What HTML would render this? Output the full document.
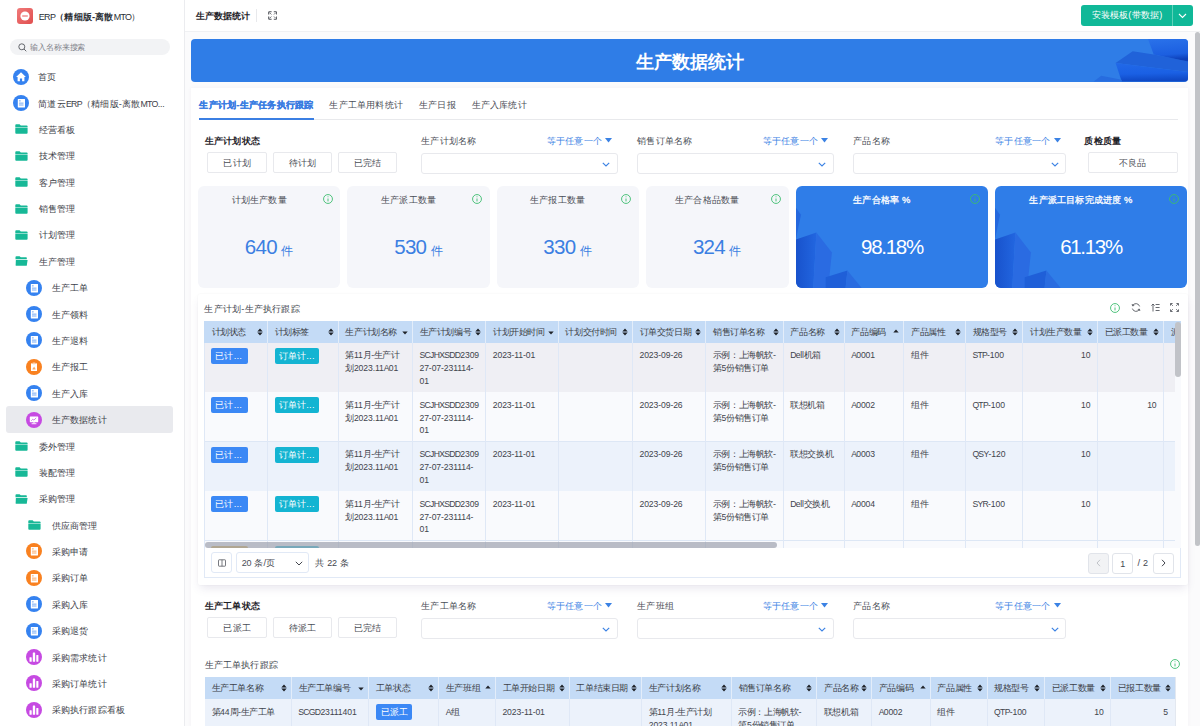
<!DOCTYPE html><html><head><meta charset="utf-8"><title>生产数据统计</title><style>
*{box-sizing:border-box;margin:0;padding:0}
html,body{width:1200px;height:726px;overflow:hidden;background:#fff;font-family:"Liberation Sans",sans-serif;color:#333;letter-spacing:0.2px}
.a{position:absolute}
.t{white-space:nowrap;line-height:1}
#side{position:absolute;left:0;top:0;width:184px;height:726px;background:#fff}
#sideb{position:absolute;left:184px;top:0;width:1px;height:726px;background:#ebecef}
.si{position:absolute;left:0;width:184px;height:26px}
.si .tx{position:absolute;top:50%;transform:translateY(-50%);font-size:9.6px;color:#3a3d45;white-space:nowrap;line-height:1}
.ic{position:absolute;width:16px;height:16px;border-radius:50%}
#head{position:absolute;left:185px;top:0;width:1015px;height:32px;background:#fff;border-bottom:1px solid #f0f1f3}
#main{position:absolute;left:185px;top:32px;width:1015px;height:694px;background:#fbfbfc;overflow:hidden}
.banner{position:absolute;left:6px;top:7.1px;width:997px;height:42.6px;border-radius:4px;background:#2f7de7;overflow:hidden}
.card{position:absolute;background:#fff}
.btn{position:absolute;height:21px;border:1px solid #e8e9ed;border-radius:2px;background:#fff;font-size:9.4px;color:#4a4d55;text-align:center;line-height:19px;white-space:nowrap}
.lbl{position:absolute;font-size:9.4px;color:#4a4d55;white-space:nowrap;line-height:1}
.lblb{position:absolute;font-size:9.4px;color:#1f2329;font-weight:bold;white-space:nowrap;line-height:1}
.eq{position:absolute;font-size:9.4px;color:#3b82e4;white-space:nowrap;line-height:1}
.sel{position:absolute;height:21px;border:1px solid #e8e9ed;border-radius:3px;background:#fff}
.stat{position:absolute;top:97.6px;height:102px;border-radius:6px;background:#f5f6fa;overflow:hidden}
.stat .st{position:absolute;top:13px;width:100%;text-align:center;font-size:9.4px;color:#494c54;line-height:1;white-space:nowrap}
.stat .sv{position:absolute;top:52px;width:100%;text-align:center;color:#3b7fe2;white-space:nowrap;line-height:1}
.th{position:absolute;height:100%;top:0;font-size:9.4px;color:#3c3f47;white-space:nowrap;line-height:1}
.td{position:absolute;font-size:9px;color:#41444c;white-space:nowrap;line-height:12.8px;letter-spacing:-0.4px}
.U{letter-spacing:-0.7px;font-size:0.957em}.W{letter-spacing:-0.25px;font-size:0.957em}.D{letter-spacing:-0.1px;font-size:0.957em}
.tag{position:absolute;height:15.8px;border-radius:2px;color:#fff;font-size:9.4px;line-height:15.8px;padding-left:4px;white-space:nowrap}
</style></head><body>
<div id="side">
<div class="a" style="left:17px;top:8px;width:16px;height:16px;border-radius:3px;background:linear-gradient(135deg,#f07a7a,#e04e4e)"><svg class="a" style="left:0;top:0" width="16" height="16" viewBox="0 0 16 16"><circle cx="8" cy="8" r="4.6" fill="#fff"/><rect x="5.2" y="7.3" width="5.6" height="1.4" fill="#ec6a6a" opacity="0.8"/></svg></div>
<div class="a t" style="left:38.8px;top:11.8px;font-size:9.4px;color:#2b2f36"><span class="U">ERP</span><b style="font-weight:600">（精细版-离散</b><span class="U">MTO</span>）</div>
<div class="a" style="left:10px;top:39px;width:160px;height:16px;border-radius:8px;background:#f2f3f5"></div>
<svg class="a" style="left:17.5px;top:42.5px" width="9" height="9" viewBox="0 0 9 9"><circle cx="3.8" cy="3.8" r="3.0" fill="none" stroke="#55585f" stroke-width="0.9"/><line x1="6" y1="6" x2="8.3" y2="8.3" stroke="#55585f" stroke-width="0.9"/></svg>
<div class="a t" style="left:30.3px;top:44.2px;font-size:7.8px;color:#7d8088;letter-spacing:-0.15px">输入名称来搜索</div>
<svg class="a" style="left:13px;top:68.6px" width="16" height="16" viewBox="0 0 16 16"><circle cx="8" cy="8" r="8" fill="#3582f0"/><path d="M8 3.3 L12.9 8.1 L11.4 8.1 L11.4 12.3 L9.1 12.3 L9.1 9.4 L6.9 9.4 L6.9 12.3 L4.6 12.3 L4.6 8.1 L3.1 8.1 Z" fill="#fff"/></svg>
<div class="a t" style="left:38.3px;top:73.20px;font-size:9.2px;color:#3d4149">首页</div>
<svg class="a" style="left:13px;top:94.97999999999999px" width="16" height="16" viewBox="0 0 16 16"><circle cx="8" cy="8" r="8" fill="#3582f0"/><rect x="4.8" y="3.9" width="7.2" height="8.5" rx="0.3" fill="#fff"/><rect x="6.0" y="5.5" width="1.7" height="0.8" fill="#3582f0" opacity="0.85"/><rect x="6.0" y="7.7" width="4.5" height="0.8" fill="#3582f0" opacity="0.85"/><rect x="6.0" y="9.6" width="4.5" height="0.8" fill="#3582f0" opacity="0.85"/></svg>
<div class="a t" style="left:38.3px;top:99.58px;font-size:9.2px;color:#3d4149">简道云<span class="U">ERP</span>（精细版-离散<span class="U">MTO</span><span class="D">...</span></div>
<svg class="a" style="left:14.8px;top:124.35999999999999px" width="13" height="10" viewBox="0 0 13 10"><path d="M0.3 1.2 Q0.3 0.3 1.2 0.3 L4.6 0.3 L5.8 1.4 L11.6 1.4 Q12.6 1.4 12.6 2.3 L12.6 2.9 L0.3 2.9 Z" fill="#17b897"/><path d="M0.3 3.6 L12.6 3.6 L12.6 8.8 Q12.6 9.7 11.7 9.7 L1.2 9.7 Q0.3 9.7 0.3 8.8 Z" fill="#17b897"/></svg>
<div class="a t" style="left:38.599999999999994px;top:125.96px;font-size:9.2px;color:#3d4149">经营看板</div>
<svg class="a" style="left:14.8px;top:150.74px" width="13" height="10" viewBox="0 0 13 10"><path d="M0.3 1.2 Q0.3 0.3 1.2 0.3 L4.6 0.3 L5.8 1.4 L11.6 1.4 Q12.6 1.4 12.6 2.3 L12.6 2.9 L0.3 2.9 Z" fill="#17b897"/><path d="M0.3 3.6 L12.6 3.6 L12.6 8.8 Q12.6 9.7 11.7 9.7 L1.2 9.7 Q0.3 9.7 0.3 8.8 Z" fill="#17b897"/></svg>
<div class="a t" style="left:38.599999999999994px;top:152.34px;font-size:9.2px;color:#3d4149">技术管理</div>
<svg class="a" style="left:14.8px;top:177.12px" width="13" height="10" viewBox="0 0 13 10"><path d="M0.3 1.2 Q0.3 0.3 1.2 0.3 L4.6 0.3 L5.8 1.4 L11.6 1.4 Q12.6 1.4 12.6 2.3 L12.6 2.9 L0.3 2.9 Z" fill="#17b897"/><path d="M0.3 3.6 L12.6 3.6 L12.6 8.8 Q12.6 9.7 11.7 9.7 L1.2 9.7 Q0.3 9.7 0.3 8.8 Z" fill="#17b897"/></svg>
<div class="a t" style="left:38.599999999999994px;top:178.72px;font-size:9.2px;color:#3d4149">客户管理</div>
<svg class="a" style="left:14.8px;top:203.5px" width="13" height="10" viewBox="0 0 13 10"><path d="M0.3 1.2 Q0.3 0.3 1.2 0.3 L4.6 0.3 L5.8 1.4 L11.6 1.4 Q12.6 1.4 12.6 2.3 L12.6 2.9 L0.3 2.9 Z" fill="#17b897"/><path d="M0.3 3.6 L12.6 3.6 L12.6 8.8 Q12.6 9.7 11.7 9.7 L1.2 9.7 Q0.3 9.7 0.3 8.8 Z" fill="#17b897"/></svg>
<div class="a t" style="left:38.599999999999994px;top:205.10px;font-size:9.2px;color:#3d4149">销售管理</div>
<svg class="a" style="left:14.8px;top:229.88px" width="13" height="10" viewBox="0 0 13 10"><path d="M0.3 1.2 Q0.3 0.3 1.2 0.3 L4.6 0.3 L5.8 1.4 L11.6 1.4 Q12.6 1.4 12.6 2.3 L12.6 2.9 L0.3 2.9 Z" fill="#17b897"/><path d="M0.3 3.6 L12.6 3.6 L12.6 8.8 Q12.6 9.7 11.7 9.7 L1.2 9.7 Q0.3 9.7 0.3 8.8 Z" fill="#17b897"/></svg>
<div class="a t" style="left:38.599999999999994px;top:231.48px;font-size:9.2px;color:#3d4149">计划管理</div>
<svg class="a" style="left:14.8px;top:256.26px" width="13" height="10" viewBox="0 0 13 10"><path d="M0.5 1.2 Q0.5 0.3 1.4 0.3 L4.6 0.3 L5.8 1.3 L11.2 1.3 Q11.8 1.3 11.8 2 L11.8 3.2 L0.5 3.2 Z" fill="#17b897"/><path d="M0.9 3.9 L12.6 3.9 L11.8 9.4 Q11.7 9.7 11.3 9.7 L1.0 9.7 Q0.6 9.7 0.6 9.3 Z" fill="#17b897"/></svg>
<div class="a t" style="left:38.599999999999994px;top:257.86px;font-size:9.2px;color:#3d4149">生产管理</div>
<svg class="a" style="left:26.3px;top:279.64px" width="16" height="16" viewBox="0 0 16 16"><circle cx="8" cy="8" r="8" fill="#3582f0"/><rect x="4.8" y="3.9" width="7.2" height="8.5" rx="0.3" fill="#fff"/><rect x="6.0" y="5.5" width="1.7" height="0.8" fill="#3582f0" opacity="0.85"/><rect x="6.0" y="7.7" width="4.5" height="0.8" fill="#3582f0" opacity="0.85"/><rect x="6.0" y="9.6" width="4.5" height="0.8" fill="#3582f0" opacity="0.85"/></svg>
<div class="a t" style="left:51.599999999999994px;top:284.24px;font-size:9.2px;color:#3d4149">生产工单</div>
<svg class="a" style="left:26.3px;top:306.02px" width="16" height="16" viewBox="0 0 16 16"><circle cx="8" cy="8" r="8" fill="#3582f0"/><rect x="4.8" y="3.9" width="7.2" height="8.5" rx="0.3" fill="#fff"/><rect x="6.0" y="5.5" width="1.7" height="0.8" fill="#3582f0" opacity="0.85"/><rect x="6.0" y="7.7" width="4.5" height="0.8" fill="#3582f0" opacity="0.85"/><rect x="6.0" y="9.6" width="4.5" height="0.8" fill="#3582f0" opacity="0.85"/></svg>
<div class="a t" style="left:51.599999999999994px;top:310.62px;font-size:9.2px;color:#3d4149">生产领料</div>
<svg class="a" style="left:26.3px;top:332.4px" width="16" height="16" viewBox="0 0 16 16"><circle cx="8" cy="8" r="8" fill="#3582f0"/><rect x="4.8" y="3.9" width="7.2" height="8.5" rx="0.3" fill="#fff"/><rect x="6.0" y="5.5" width="1.7" height="0.8" fill="#3582f0" opacity="0.85"/><rect x="6.0" y="7.7" width="4.5" height="0.8" fill="#3582f0" opacity="0.85"/><rect x="6.0" y="9.6" width="4.5" height="0.8" fill="#3582f0" opacity="0.85"/></svg>
<div class="a t" style="left:51.599999999999994px;top:337.00px;font-size:9.2px;color:#3d4149">生产退料</div>
<svg class="a" style="left:26.3px;top:358.78px" width="16" height="16" viewBox="0 0 16 16"><circle cx="8" cy="8" r="8" fill="#f98120"/><rect x="5" y="4.2" width="6" height="7.8" rx="0.6" fill="#fff"/><rect x="6.6" y="3.6" width="2.8" height="1.2" rx="0.3" fill="#fff" stroke="#f98120" stroke-width="0.4"/><path d="M6.4 10.6 L7.3 8 L8 9.3 L8.6 7.4 L9.6 10.6 Z" fill="#f98120" opacity="0.7"/></svg>
<div class="a t" style="left:51.599999999999994px;top:363.38px;font-size:9.2px;color:#3d4149">生产报工</div>
<svg class="a" style="left:26.3px;top:385.15999999999997px" width="16" height="16" viewBox="0 0 16 16"><circle cx="8" cy="8" r="8" fill="#3582f0"/><rect x="4.8" y="3.9" width="7.2" height="8.5" rx="0.3" fill="#fff"/><rect x="6.0" y="5.5" width="1.7" height="0.8" fill="#3582f0" opacity="0.85"/><rect x="6.0" y="7.7" width="4.5" height="0.8" fill="#3582f0" opacity="0.85"/><rect x="6.0" y="9.6" width="4.5" height="0.8" fill="#3582f0" opacity="0.85"/></svg>
<div class="a t" style="left:51.599999999999994px;top:389.76px;font-size:9.2px;color:#3d4149">生产入库</div>
<div class="a" style="left:5.6px;top:406.14px;width:167.4px;height:26.4px;border-radius:3px;background:#e9eaee"></div>
<svg class="a" style="left:26.3px;top:411.53999999999996px" width="16" height="16" viewBox="0 0 16 16"><circle cx="8" cy="8" r="8" fill="#c64ae2"/><rect x="3.8" y="4.4" width="8.4" height="5.8" rx="0.6" fill="#fff"/><rect x="7.4" y="10.2" width="1.2" height="1.2" fill="#fff"/><rect x="5.6" y="11.3" width="4.8" height="0.9" fill="#fff"/><path d="M5.2 8.8 L6.8 7.2 L7.9 8.1 L10.2 5.9" stroke="#c64ae2" stroke-width="0.7" fill="none"/></svg>
<div class="a t" style="left:51.599999999999994px;top:416.14px;font-size:9.2px;color:#3d4149">生产数据统计</div>
<svg class="a" style="left:14.8px;top:440.91999999999996px" width="13" height="10" viewBox="0 0 13 10"><path d="M0.3 1.2 Q0.3 0.3 1.2 0.3 L4.6 0.3 L5.8 1.4 L11.6 1.4 Q12.6 1.4 12.6 2.3 L12.6 2.9 L0.3 2.9 Z" fill="#17b897"/><path d="M0.3 3.6 L12.6 3.6 L12.6 8.8 Q12.6 9.7 11.7 9.7 L1.2 9.7 Q0.3 9.7 0.3 8.8 Z" fill="#17b897"/></svg>
<div class="a t" style="left:38.599999999999994px;top:442.52px;font-size:9.2px;color:#3d4149">委外管理</div>
<svg class="a" style="left:14.8px;top:467.29999999999995px" width="13" height="10" viewBox="0 0 13 10"><path d="M0.3 1.2 Q0.3 0.3 1.2 0.3 L4.6 0.3 L5.8 1.4 L11.6 1.4 Q12.6 1.4 12.6 2.3 L12.6 2.9 L0.3 2.9 Z" fill="#17b897"/><path d="M0.3 3.6 L12.6 3.6 L12.6 8.8 Q12.6 9.7 11.7 9.7 L1.2 9.7 Q0.3 9.7 0.3 8.8 Z" fill="#17b897"/></svg>
<div class="a t" style="left:38.599999999999994px;top:468.90px;font-size:9.2px;color:#3d4149">装配管理</div>
<svg class="a" style="left:14.8px;top:493.67999999999995px" width="13" height="10" viewBox="0 0 13 10"><path d="M0.5 1.2 Q0.5 0.3 1.4 0.3 L4.6 0.3 L5.8 1.3 L11.2 1.3 Q11.8 1.3 11.8 2 L11.8 3.2 L0.5 3.2 Z" fill="#17b897"/><path d="M0.9 3.9 L12.6 3.9 L11.8 9.4 Q11.7 9.7 11.3 9.7 L1.0 9.7 Q0.6 9.7 0.6 9.3 Z" fill="#17b897"/></svg>
<div class="a t" style="left:38.599999999999994px;top:495.28px;font-size:9.2px;color:#3d4149">采购管理</div>
<svg class="a" style="left:28px;top:520.06px" width="13" height="10" viewBox="0 0 13 10"><path d="M0.3 1.2 Q0.3 0.3 1.2 0.3 L4.6 0.3 L5.8 1.4 L11.6 1.4 Q12.6 1.4 12.6 2.3 L12.6 2.9 L0.3 2.9 Z" fill="#17b897"/><path d="M0.3 3.6 L12.6 3.6 L12.6 8.8 Q12.6 9.7 11.7 9.7 L1.2 9.7 Q0.3 9.7 0.3 8.8 Z" fill="#17b897"/></svg>
<div class="a t" style="left:51.599999999999994px;top:521.66px;font-size:9.2px;color:#3d4149">供应商管理</div>
<svg class="a" style="left:26.3px;top:543.4399999999999px" width="16" height="16" viewBox="0 0 16 16"><circle cx="8" cy="8" r="8" fill="#f98120"/><rect x="4.8" y="3.9" width="7.2" height="8.5" rx="0.3" fill="#fff"/><rect x="6.0" y="5.5" width="1.7" height="0.8" fill="#f98120" opacity="0.85"/><rect x="6.0" y="7.7" width="4.5" height="0.8" fill="#f98120" opacity="0.85"/><rect x="6.0" y="9.6" width="4.5" height="0.8" fill="#f98120" opacity="0.85"/></svg>
<div class="a t" style="left:51.599999999999994px;top:548.04px;font-size:9.2px;color:#3d4149">采购申请</div>
<svg class="a" style="left:26.3px;top:569.8199999999999px" width="16" height="16" viewBox="0 0 16 16"><circle cx="8" cy="8" r="8" fill="#f98120"/><rect x="4.8" y="3.9" width="7.2" height="8.5" rx="0.3" fill="#fff"/><rect x="6.0" y="5.5" width="1.7" height="0.8" fill="#f98120" opacity="0.85"/><rect x="6.0" y="7.7" width="4.5" height="0.8" fill="#f98120" opacity="0.85"/><rect x="6.0" y="9.6" width="4.5" height="0.8" fill="#f98120" opacity="0.85"/></svg>
<div class="a t" style="left:51.599999999999994px;top:574.42px;font-size:9.2px;color:#3d4149">采购订单</div>
<svg class="a" style="left:26.3px;top:596.2px" width="16" height="16" viewBox="0 0 16 16"><circle cx="8" cy="8" r="8" fill="#3582f0"/><rect x="4.8" y="3.9" width="7.2" height="8.5" rx="0.3" fill="#fff"/><rect x="6.0" y="5.5" width="1.7" height="0.8" fill="#3582f0" opacity="0.85"/><rect x="6.0" y="7.7" width="4.5" height="0.8" fill="#3582f0" opacity="0.85"/><rect x="6.0" y="9.6" width="4.5" height="0.8" fill="#3582f0" opacity="0.85"/></svg>
<div class="a t" style="left:51.599999999999994px;top:600.80px;font-size:9.2px;color:#3d4149">采购入库</div>
<svg class="a" style="left:26.3px;top:622.58px" width="16" height="16" viewBox="0 0 16 16"><circle cx="8" cy="8" r="8" fill="#3582f0"/><rect x="4.8" y="3.9" width="7.2" height="8.5" rx="0.3" fill="#fff"/><rect x="6.0" y="5.5" width="1.7" height="0.8" fill="#3582f0" opacity="0.85"/><rect x="6.0" y="7.7" width="4.5" height="0.8" fill="#3582f0" opacity="0.85"/><rect x="6.0" y="9.6" width="4.5" height="0.8" fill="#3582f0" opacity="0.85"/></svg>
<div class="a t" style="left:51.599999999999994px;top:627.18px;font-size:9.2px;color:#3d4149">采购退货</div>
<svg class="a" style="left:26.3px;top:648.96px" width="16" height="16" viewBox="0 0 16 16"><circle cx="8" cy="8" r="8" fill="#c64ae2"/><rect x="3.5" y="8.2" width="2.2" height="4.5" rx="0.5" fill="#fff"/><rect x="6.8" y="3.4" width="2.35" height="9.3" rx="0.5" fill="#fff"/><rect x="10.3" y="5.9" width="2.1" height="6.8" rx="0.5" fill="#fff"/></svg>
<div class="a t" style="left:51.599999999999994px;top:653.56px;font-size:9.2px;color:#3d4149">采购需求统计</div>
<svg class="a" style="left:26.3px;top:675.34px" width="16" height="16" viewBox="0 0 16 16"><circle cx="8" cy="8" r="8" fill="#c64ae2"/><rect x="3.5" y="8.2" width="2.2" height="4.5" rx="0.5" fill="#fff"/><rect x="6.8" y="3.4" width="2.35" height="9.3" rx="0.5" fill="#fff"/><rect x="10.3" y="5.9" width="2.1" height="6.8" rx="0.5" fill="#fff"/></svg>
<div class="a t" style="left:51.599999999999994px;top:679.94px;font-size:9.2px;color:#3d4149">采购订单统计</div>
<svg class="a" style="left:26.3px;top:701.72px" width="16" height="16" viewBox="0 0 16 16"><circle cx="8" cy="8" r="8" fill="#c64ae2"/><rect x="3.5" y="8.2" width="2.2" height="4.5" rx="0.5" fill="#fff"/><rect x="6.8" y="3.4" width="2.35" height="9.3" rx="0.5" fill="#fff"/><rect x="10.3" y="5.9" width="2.1" height="6.8" rx="0.5" fill="#fff"/></svg>
<div class="a t" style="left:51.599999999999994px;top:706.32px;font-size:9.2px;color:#3d4149">采购执行跟踪看板</div>
</div><div id="sideb"></div>
<div id="head">
<div class="a t" style="left:10.5px;top:11.2px;font-size:9.4px;font-weight:bold;color:#1f2329">生产数据统计</div>
<div class="a" style="left:71px;top:9px;width:1px;height:13px;background:#e8e9ec"></div>
<svg class="a" style="left:82.7px;top:11.3px" width="9.4" height="9" viewBox="0 0 9.4 9" fill="none" stroke="#50535a" stroke-width="1.1"><path d="M3.6 0.8 H1.4 Q0.7 0.8 0.7 1.5 V3.4 M5.8 0.8 H8 Q8.7 0.8 8.7 1.5 V3.4 M8.7 5.6 V7.5 Q8.7 8.2 8 8.2 H5.8 M3.6 8.2 H1.4 Q0.7 8.2 0.7 7.5 V5.6"/><path d="M1.6 1.7 L3.4 3.5 M7.8 1.7 L6 3.5 M7.8 7.3 L6 5.5 M1.6 7.3 L3.4 5.5" stroke-width="0.8"/></svg>
<div class="a" style="left:896px;top:5.2px;width:112px;height:21px;border-radius:3px;background:#10b898"></div>
<div class="a" style="left:987px;top:5.2px;width:1px;height:21px;background:#5fd1b8"></div>
<div class="a t" style="left:906.5px;top:11.2px;font-size:9.2px;color:#fff">安装模板(带数据)</div>
<svg class="a" style="left:993px;top:13px" width="9" height="6" viewBox="0 0 9 6"><path d="M1 1 L4.5 4.5 L8 1" stroke="#fff" stroke-width="1.1" fill="none"/></svg>
</div>
<div id="main">
<div class="banner"><svg class="a" style="left:0;top:0" width="997" height="42.5" viewBox="0 0 997 42.5"><defs><linearGradient id="bg1" x1="0" y1="0" x2="0.15" y2="1"><stop offset="0" stop-color="#2a72ea"/><stop offset="0.75" stop-color="#1c5fe0"/><stop offset="1" stop-color="#0d3fb8"/></linearGradient><linearGradient id="bg2" x1="0" y1="0" x2="0.1" y2="1"><stop offset="0" stop-color="#2269e8"/><stop offset="0.6" stop-color="#1a60e4"/><stop offset="1" stop-color="#0f48c4"/></linearGradient></defs><polygon points="924.6,24.1 941.7,12.3 962.7,15.4 997,22.4 997,33" fill="#2062d9"/><polygon points="924.6,24.1 997,33 997,42.5 930.7,42.5" fill="url(#bg2)"/><polygon points="957,0 997,0 997,22.4 962.7,15.4" fill="url(#bg1)"/><polygon points="902.7,42.5 910.2,36.8 930.7,40.7 930.7,42.5" fill="#276cdf"/></svg><div class="a t" style="left:0;width:997px;text-align:center;top:13.5px;font-size:18.4px;font-weight:bold;color:#fff;letter-spacing:0">生产数据统计</div></div>
<div class="card" style="left:6px;top:56px;width:997px;height:640px;box-shadow:0 0 4px rgba(90,60,110,0.05)">
<div class="a t" style="left:8.300000000000011px;top:11.799999999999997px;font-size:9.4px;font-weight:bold;color:#3a7de2;letter-spacing:0.25px;-webkit-text-stroke:0.25px #3a7de2">生产计划-生产任务执行跟踪</div>
<div class="a t" style="left:138.39999999999998px;top:11.799999999999997px;font-size:9.4px;color:#4a4d55">生产工单用料统计</div>
<div class="a t" style="left:228px;top:11.799999999999997px;font-size:9.4px;color:#4a4d55">生产日报</div>
<div class="a t" style="left:280.6px;top:11.799999999999997px;font-size:9.4px;color:#4a4d55">生产入库统计</div>
<div class="a" style="left:8px;top:31px;width:979px;height:1px;background:#e8e9ec"></div>
<div class="a" style="left:8px;top:30px;width:115px;height:2px;background:#3b7fe3"></div>
<div class="lblb" style="left:13.800000000000011px;top:48.400000000000006px">生产计划状态</div>
<div class="btn" style="left:16.400000000000006px;top:63.599999999999994px;width:59.8px">已计划</div>
<div class="btn" style="left:81.60000000000002px;top:63.599999999999994px;width:59.8px">待计划</div>
<div class="btn" style="left:146.60000000000002px;top:63.599999999999994px;width:59.8px">已完结</div>
<div class="lbl" style="left:230.20000000000005px;top:48.400000000000006px">生产计划名称</div>
<div class="eq" style="left:355.79999999999995px;top:47.5px">等于任意一个</div>
<svg class="a" style="left:414.29999999999995px;top:50.0px" width="7" height="5" viewBox="0 0 7 5"><path d="M0 0 H7 L3.5 4.4 Z" fill="#3b82e4"/></svg>
<div class="sel" style="left:229.60000000000002px;top:64.70000000000002px;width:197.2px;height:21.4px"></div>
<svg class="a" style="left:411.29999999999995px;top:74.0px" width="8" height="5" viewBox="0 0 8 5"><path d="M0.8 0.8 L4 4 L7.2 0.8" stroke="#3b82e4" stroke-width="1.15" fill="none"/></svg>
<div class="lbl" style="left:446.20000000000005px;top:48.400000000000006px">销售订单名称</div>
<div class="eq" style="left:571.8px;top:47.5px">等于任意一个</div>
<svg class="a" style="left:630.3px;top:50.0px" width="7" height="5" viewBox="0 0 7 5"><path d="M0 0 H7 L3.5 4.4 Z" fill="#3b82e4"/></svg>
<div class="sel" style="left:445.6px;top:64.70000000000002px;width:197.2px;height:21.4px"></div>
<svg class="a" style="left:627.3px;top:74.0px" width="8" height="5" viewBox="0 0 8 5"><path d="M0.8 0.8 L4 4 L7.2 0.8" stroke="#3b82e4" stroke-width="1.15" fill="none"/></svg>
<div class="lbl" style="left:662.2px;top:48.400000000000006px">产品名称</div>
<div class="eq" style="left:804.2px;top:47.5px">等于任意一个</div>
<svg class="a" style="left:862.7px;top:50.0px" width="7" height="5" viewBox="0 0 7 5"><path d="M0 0 H7 L3.5 4.4 Z" fill="#3b82e4"/></svg>
<div class="sel" style="left:661.6px;top:64.70000000000002px;width:213.6px;height:21.4px"></div>
<svg class="a" style="left:859.7px;top:74.0px" width="8" height="5" viewBox="0 0 8 5"><path d="M0.8 0.8 L4 4 L7.2 0.8" stroke="#3b82e4" stroke-width="1.15" fill="none"/></svg>
<div class="lblb" style="left:893.4000000000001px;top:48.400000000000006px">质检质量</div>
<div class="btn" style="left:896.5999999999999px;top:63.599999999999994px;width:90.2px">不良品</div>
<div class="stat" style="left:6.900000000000006px;width:142.6px">
<div class="a t" style="left:0;width:122.6px;text-align:center;top:9.6px;font-size:9.4px;color:#494c54">计划生产数量</div>
<svg class="a" style="left:124.8px;top:8.4px" width="10" height="10" viewBox="0 0 10 10"><circle cx="5" cy="5" r="4.45" fill="none" stroke="#3dbd6f" stroke-width="0.9"/><rect x="4.55" y="4.5" width="0.9" height="2.9" fill="#3dbd6f"/><circle cx="5" cy="2.85" r="0.5" fill="#3dbd6f"/></svg>
<div class="a t" style="left:0;width:142.6px;text-align:center;top:52px;color:#3b7fe2"><span class="nl" style="font-size:20.5px;letter-spacing:-0.75px;position:relative;top:-0.6px">640</span><span style="font-size:12.4px;margin-left:4.5px">件</span></div>
</div>
<div class="stat" style="left:156.2px;width:142.8px">
<div class="a t" style="left:0;width:122.80000000000001px;text-align:center;top:9.6px;font-size:9.4px;color:#494c54">生产派工数量</div>
<svg class="a" style="left:125.00000000000001px;top:8.4px" width="10" height="10" viewBox="0 0 10 10"><circle cx="5" cy="5" r="4.45" fill="none" stroke="#3dbd6f" stroke-width="0.9"/><rect x="4.55" y="4.5" width="0.9" height="2.9" fill="#3dbd6f"/><circle cx="5" cy="2.85" r="0.5" fill="#3dbd6f"/></svg>
<div class="a t" style="left:0;width:142.8px;text-align:center;top:52px;color:#3b7fe2"><span class="nl" style="font-size:20.5px;letter-spacing:-0.75px;position:relative;top:-0.6px">530</span><span style="font-size:12.4px;margin-left:4.5px">件</span></div>
</div>
<div class="stat" style="left:305.6px;width:142.2px">
<div class="a t" style="left:0;width:122.19999999999999px;text-align:center;top:9.6px;font-size:9.4px;color:#494c54">生产报工数量</div>
<svg class="a" style="left:124.39999999999999px;top:8.4px" width="10" height="10" viewBox="0 0 10 10"><circle cx="5" cy="5" r="4.45" fill="none" stroke="#3dbd6f" stroke-width="0.9"/><rect x="4.55" y="4.5" width="0.9" height="2.9" fill="#3dbd6f"/><circle cx="5" cy="2.85" r="0.5" fill="#3dbd6f"/></svg>
<div class="a t" style="left:0;width:142.2px;text-align:center;top:52px;color:#3b7fe2"><span class="nl" style="font-size:20.5px;letter-spacing:-0.75px;position:relative;top:-0.6px">330</span><span style="font-size:12.4px;margin-left:4.5px">件</span></div>
</div>
<div class="stat" style="left:455px;width:142.5px">
<div class="a t" style="left:0;width:122.5px;text-align:center;top:9.6px;font-size:9.4px;color:#494c54">生产合格品数量</div>
<svg class="a" style="left:124.7px;top:8.4px" width="10" height="10" viewBox="0 0 10 10"><circle cx="5" cy="5" r="4.45" fill="none" stroke="#3dbd6f" stroke-width="0.9"/><rect x="4.55" y="4.5" width="0.9" height="2.9" fill="#3dbd6f"/><circle cx="5" cy="2.85" r="0.5" fill="#3dbd6f"/></svg>
<div class="a t" style="left:0;width:142.5px;text-align:center;top:52px;color:#3b7fe2"><span class="nl" style="font-size:20.5px;letter-spacing:-0.75px;position:relative;top:-0.6px">324</span><span style="font-size:12.4px;margin-left:4.5px">件</span></div>
</div>
<div class="stat" style="left:604.8px;width:192.3px;background:#2f7de8">
<svg class="a" style="left:0;top:0" width="192.3" height="102" viewBox="0 0 192.3 102"><defs><linearGradient id="cg1" x1="0" y1="0" x2="1" y2="0"><stop offset="0" stop-color="#1852cc"/><stop offset="1" stop-color="#2266e0"/></linearGradient></defs><polygon points="0,21.8 5,28.7 0,53" fill="#2468de"/><polygon points="0,53.5 20.4,46.4 17.3,102 0,102" fill="url(#cg1)"/><polygon points="20.4,46.4 35.9,66.5 32.2,102 17.3,102" fill="#2a6be2"/><polygon points="29.7,91.3 51.4,84.5 49.6,102 29.7,102" fill="#1f5fd8"/><polygon points="51.4,84.5 65.7,102 49.6,102" fill="#2a6ce0"/></svg>
<div class="a t" style="left:0;width:172.3px;text-align:center;top:9.6px;font-size:9.4px;font-weight:normal;color:#fff;-webkit-text-stroke:0.3px #fff">生产合格率 %</div>
<svg class="a" style="left:174.3px;top:8.4px" width="10" height="10" viewBox="0 0 10 10"><circle cx="5" cy="5" r="4.45" fill="none" stroke="#3dbd6f" stroke-width="0.9"/><rect x="4.55" y="4.5" width="0.9" height="2.9" fill="#3dbd6f"/><circle cx="5" cy="2.85" r="0.5" fill="#3dbd6f"/></svg>
<div class="a t" style="left:0;width:192.3px;text-align:center;top:51.4px;color:#fff"><span class="nl" style="font-size:20.5px;letter-spacing:-1.3px">98.18%</span></div>
</div>
<div class="stat" style="left:803.6px;width:192.8px;background:#2f7de8">
<svg class="a" style="left:0;top:0" width="192.8" height="102" viewBox="0 0 192.8 102"><defs><linearGradient id="cg1" x1="0" y1="0" x2="1" y2="0"><stop offset="0" stop-color="#1852cc"/><stop offset="1" stop-color="#2266e0"/></linearGradient></defs><polygon points="0,21.8 5,28.7 0,53" fill="#2468de"/><polygon points="0,53.5 20.4,46.4 17.3,102 0,102" fill="url(#cg1)"/><polygon points="20.4,46.4 35.9,66.5 32.2,102 17.3,102" fill="#2a6be2"/><polygon points="29.7,91.3 51.4,84.5 49.6,102 29.7,102" fill="#1f5fd8"/><polygon points="51.4,84.5 65.7,102 49.6,102" fill="#2a6ce0"/></svg>
<div class="a t" style="left:0;width:172.8px;text-align:center;top:9.6px;font-size:9.4px;font-weight:normal;color:#fff;-webkit-text-stroke:0.3px #fff">生产派工目标完成进度 %</div>
<svg class="a" style="left:174.8px;top:8.4px" width="10" height="10" viewBox="0 0 10 10"><circle cx="5" cy="5" r="4.45" fill="none" stroke="#3dbd6f" stroke-width="0.9"/><rect x="4.55" y="4.5" width="0.9" height="2.9" fill="#3dbd6f"/><circle cx="5" cy="2.85" r="0.5" fill="#3dbd6f"/></svg>
<div class="a t" style="left:0;width:192.8px;text-align:center;top:51.4px;color:#fff"><span class="nl" style="font-size:20.5px;letter-spacing:-1.3px">61.13%</span></div>
</div>
<div class="a" style="left:7.199999999999989px;top:206px;width:990px;height:290.6px;background:#fff;border-radius:2px;box-shadow:0 5px 9px -2px rgba(80,60,120,0.13),0 0 2px rgba(0,0,0,0.05)">
<div class="a t" style="left:6.300000000000011px;top:9.800000000000011px;font-size:9.4px;color:#43464e">生产计划-生产执行跟踪</div>
<svg class="a" style="left:912.3px;top:8.800000000000011px" width="10" height="10" viewBox="0 0 10 10"><circle cx="5" cy="5" r="4.45" fill="none" stroke="#3dbd6f" stroke-width="0.9"/><rect x="4.55" y="4.5" width="0.9" height="2.9" fill="#3dbd6f"/><circle cx="5" cy="2.85" r="0.5" fill="#3dbd6f"/></svg>
<svg class="a" style="left:932.5999999999999px;top:9.199999999999989px" width="10" height="9" viewBox="0 0 10 9" fill="none" stroke="#55585f" stroke-width="0.9"><path d="M8.6 3.4 A3.8 3.8 0 0 0 1.6 2.6 M1.4 5.6 A3.8 3.8 0 0 0 8.4 6.4"/><path d="M1.2 1 L1.5 2.8 L3.2 2.5 M8.8 8 L8.5 6.2 L6.8 6.5"/></svg>
<svg class="a" style="left:952.5px;top:9.199999999999989px" width="9" height="9" viewBox="0 0 9 9" fill="none" stroke="#55585f" stroke-width="0.9"><path d="M2 8.5 V1 M0.4 2.6 L2 1 L3.6 2.6 M4.6 1.5 H8.6 M4.6 4.5 H8.6 M4.6 7.5 H8.6"/></svg>
<svg class="a" style="left:972.0px;top:9.199999999999989px" width="9" height="9" viewBox="0 0 9 9" fill="none" stroke="#55585f" stroke-width="0.9"><path d="M0.5 2.6 V0.5 H2.6 M6.4 0.5 H8.5 V2.6 M8.5 6.4 V8.5 H6.4 M2.6 8.5 H0.5 V6.4"/><path d="M0.8 0.8 L3 3 M8.2 0.8 L6 3 M8.2 8.2 L6 6 M0.8 8.2 L3 6" stroke-width="0.7"/></svg>
<div class="a" style="left:6.300000000000011px;top:27.19999999999999px;width:976.7px;height:226.40000000000003px;overflow:hidden">
<div class="a" style="left:0;top:0;width:1100px;height:21.8px;background:#c4dbf6"></div>
<div class="a" style="left:0;top:21.80000000000001px;width:1100px;height:49.5px;background:#efeff4"></div>
<div class="a" style="left:0;top:70.80000000000001px;width:1100px;height:1px;background:#dde7f5"></div>
<div class="a" style="left:0;top:71.30000000000001px;width:1100px;height:49.5px;background:#f9fafd"></div>
<div class="a" style="left:0;top:120.30000000000001px;width:1100px;height:1px;background:#dde7f5"></div>
<div class="a" style="left:0;top:120.80000000000001px;width:1100px;height:49.5px;background:#ecf2fb"></div>
<div class="a" style="left:0;top:169.8px;width:1100px;height:1px;background:#dde7f5"></div>
<div class="a" style="left:0;top:170.3px;width:1100px;height:49.5px;background:#f9fafd"></div>
<div class="a" style="left:0;top:219.3px;width:1100px;height:1px;background:#dde7f5"></div>
<div class="a" style="left:0;top:219.8px;width:1100px;height:49.5px;background:#f9fafd"></div>
<div class="a" style="left:0;top:268.8px;width:1100px;height:1px;background:#dde7f5"></div>
<div class="a" style="left:62.5px;top:0;width:1px;height:21.8px;background:#e3edfa"></div>
<div class="a" style="left:62.5px;top:21.8px;width:1px;height:300px;background:#dfe8f6"></div>
<div class="a" style="left:133.3px;top:0;width:1px;height:21.8px;background:#e3edfa"></div>
<div class="a" style="left:133.3px;top:21.8px;width:1px;height:300px;background:#dfe8f6"></div>
<div class="a" style="left:207.5px;top:0;width:1px;height:21.8px;background:#e3edfa"></div>
<div class="a" style="left:207.5px;top:21.8px;width:1px;height:300px;background:#dfe8f6"></div>
<div class="a" style="left:280.8px;top:0;width:1px;height:21.8px;background:#e3edfa"></div>
<div class="a" style="left:280.8px;top:21.8px;width:1px;height:300px;background:#dfe8f6"></div>
<div class="a" style="left:353.29999999999995px;top:0;width:1px;height:21.8px;background:#e3edfa"></div>
<div class="a" style="left:353.29999999999995px;top:21.8px;width:1px;height:300px;background:#dfe8f6"></div>
<div class="a" style="left:427.5px;top:0;width:1px;height:21.8px;background:#e3edfa"></div>
<div class="a" style="left:427.5px;top:21.8px;width:1px;height:300px;background:#dfe8f6"></div>
<div class="a" style="left:500.79999999999995px;top:0;width:1px;height:21.8px;background:#e3edfa"></div>
<div class="a" style="left:500.79999999999995px;top:21.8px;width:1px;height:300px;background:#dfe8f6"></div>
<div class="a" style="left:578.3px;top:0;width:1px;height:21.8px;background:#e3edfa"></div>
<div class="a" style="left:578.3px;top:21.8px;width:1px;height:300px;background:#dfe8f6"></div>
<div class="a" style="left:639.2px;top:0;width:1px;height:21.8px;background:#e3edfa"></div>
<div class="a" style="left:639.2px;top:21.8px;width:1px;height:300px;background:#dfe8f6"></div>
<div class="a" style="left:699.0px;top:0;width:1px;height:21.8px;background:#e3edfa"></div>
<div class="a" style="left:699.0px;top:21.8px;width:1px;height:300px;background:#dfe8f6"></div>
<div class="a" style="left:760.4px;top:0;width:1px;height:21.8px;background:#e3edfa"></div>
<div class="a" style="left:760.4px;top:21.8px;width:1px;height:300px;background:#dfe8f6"></div>
<div class="a" style="left:817.9px;top:0;width:1px;height:21.8px;background:#e3edfa"></div>
<div class="a" style="left:817.9px;top:21.8px;width:1px;height:300px;background:#dfe8f6"></div>
<div class="a" style="left:892.4000000000001px;top:0;width:1px;height:21.8px;background:#e3edfa"></div>
<div class="a" style="left:892.4000000000001px;top:21.8px;width:1px;height:300px;background:#dfe8f6"></div>
<div class="a" style="left:958.5999999999999px;top:0;width:1px;height:21.8px;background:#e3edfa"></div>
<div class="a" style="left:958.5999999999999px;top:21.8px;width:1px;height:300px;background:#dfe8f6"></div>
<div class="a t" style="left:7.2px;top:7.1px;font-size:9px;color:#3c3f47;letter-spacing:-0.4px">计划状态</div>
<svg class="a" style="left:52.5px;top:7px" width="6" height="8" viewBox="0 0 6 8"><path d="M0.3 3.4 L3 0.4 L5.7 3.4 Z M0.3 4.6 L3 7.6 L5.7 4.6 Z" fill="#1f2329"/></svg>
<div class="a t" style="left:70.2px;top:7.1px;font-size:9px;color:#3c3f47;letter-spacing:-0.4px">计划标签</div>
<svg class="a" style="left:123.30000000000001px;top:7px" width="6" height="8" viewBox="0 0 6 8"><path d="M0.3 3.4 L3 0.4 L5.7 3.4 Z M0.3 4.6 L3 7.6 L5.7 4.6 Z" fill="#1f2329"/></svg>
<div class="a t" style="left:141.0px;top:7.1px;font-size:9px;color:#3c3f47;letter-spacing:-0.4px">生产计划名称</div>
<svg class="a" style="left:197.5px;top:6px" width="6" height="8" viewBox="0 0 6 8"><path d="M0.3 4.6 L3 7.6 L5.7 4.6 Z" fill="#1f2329"/></svg>
<div class="a t" style="left:215.2px;top:7.1px;font-size:9px;color:#3c3f47;letter-spacing:-0.4px">生产计划编号</div>
<svg class="a" style="left:270.8px;top:7px" width="6" height="8" viewBox="0 0 6 8"><path d="M0.3 3.4 L3 0.4 L5.7 3.4 Z M0.3 4.6 L3 7.6 L5.7 4.6 Z" fill="#1f2329"/></svg>
<div class="a t" style="left:288.5px;top:7.1px;font-size:9px;color:#3c3f47;letter-spacing:-0.4px">计划开始时间</div>
<svg class="a" style="left:343.29999999999995px;top:6px" width="6" height="8" viewBox="0 0 6 8"><path d="M0.3 4.6 L3 7.6 L5.7 4.6 Z" fill="#1f2329"/></svg>
<div class="a t" style="left:360.99999999999994px;top:7.1px;font-size:9px;color:#3c3f47;letter-spacing:-0.4px">计划交付时间</div>
<svg class="a" style="left:417.5px;top:7px" width="6" height="8" viewBox="0 0 6 8"><path d="M0.3 3.4 L3 0.4 L5.7 3.4 Z M0.3 4.6 L3 7.6 L5.7 4.6 Z" fill="#1f2329"/></svg>
<div class="a t" style="left:435.2px;top:7.1px;font-size:9px;color:#3c3f47;letter-spacing:-0.4px">订单交货日期</div>
<svg class="a" style="left:490.79999999999995px;top:7px" width="6" height="8" viewBox="0 0 6 8"><path d="M0.3 3.4 L3 0.4 L5.7 3.4 Z M0.3 4.6 L3 7.6 L5.7 4.6 Z" fill="#1f2329"/></svg>
<div class="a t" style="left:508.49999999999994px;top:7.1px;font-size:9px;color:#3c3f47;letter-spacing:-0.4px">销售订单名称</div>
<svg class="a" style="left:568.3px;top:7px" width="6" height="8" viewBox="0 0 6 8"><path d="M0.3 3.4 L3 0.4 L5.7 3.4 Z M0.3 4.6 L3 7.6 L5.7 4.6 Z" fill="#1f2329"/></svg>
<div class="a t" style="left:586.0px;top:7.1px;font-size:9px;color:#3c3f47;letter-spacing:-0.4px">产品名称</div>
<svg class="a" style="left:629.2px;top:7px" width="6" height="8" viewBox="0 0 6 8"><path d="M0.3 3.4 L3 0.4 L5.7 3.4 Z M0.3 4.6 L3 7.6 L5.7 4.6 Z" fill="#1f2329"/></svg>
<div class="a t" style="left:646.9000000000001px;top:7.1px;font-size:9px;color:#3c3f47;letter-spacing:-0.4px">产品编码</div>
<svg class="a" style="left:689.0px;top:8px" width="6" height="8" viewBox="0 0 6 8"><path d="M0.3 3.4 L3 0.4 L5.7 3.4 Z" fill="#1f2329"/></svg>
<div class="a t" style="left:706.7px;top:7.1px;font-size:9px;color:#3c3f47;letter-spacing:-0.4px">产品属性</div>
<svg class="a" style="left:750.4px;top:7px" width="6" height="8" viewBox="0 0 6 8"><path d="M0.3 3.4 L3 0.4 L5.7 3.4 Z M0.3 4.6 L3 7.6 L5.7 4.6 Z" fill="#1f2329"/></svg>
<div class="a t" style="left:768.1px;top:7.1px;font-size:9px;color:#3c3f47;letter-spacing:-0.4px">规格型号</div>
<svg class="a" style="left:807.9px;top:7px" width="6" height="8" viewBox="0 0 6 8"><path d="M0.3 3.4 L3 0.4 L5.7 3.4 Z M0.3 4.6 L3 7.6 L5.7 4.6 Z" fill="#1f2329"/></svg>
<div class="a t" style="left:825.6px;top:7.1px;font-size:9px;color:#3c3f47;letter-spacing:-0.4px">计划生产数量</div>
<svg class="a" style="left:882.4000000000001px;top:7px" width="6" height="8" viewBox="0 0 6 8"><path d="M0.3 3.4 L3 0.4 L5.7 3.4 Z M0.3 4.6 L3 7.6 L5.7 4.6 Z" fill="#1f2329"/></svg>
<div class="a t" style="left:900.1000000000001px;top:7.1px;font-size:9px;color:#3c3f47;letter-spacing:-0.4px">已派工数量</div>
<svg class="a" style="left:948.5999999999999px;top:7px" width="6" height="8" viewBox="0 0 6 8"><path d="M0.3 3.4 L3 0.4 L5.7 3.4 Z M0.3 4.6 L3 7.6 L5.7 4.6 Z" fill="#1f2329"/></svg>
<div class="a t" style="left:966.3px;top:7.1px;font-size:9px;color:#3c3f47;letter-spacing:-0.4px">派工完成率</div>
<svg class="a" style="left:1015.0px;top:7px" width="6" height="8" viewBox="0 0 6 8"><path d="M0.3 3.4 L3 0.4 L5.7 3.4 Z M0.3 4.6 L3 7.6 L5.7 4.6 Z" fill="#1f2329"/></svg>
<div class="tag" style="left:6.800000000000011px;top:26.600000000000012px;width:36.5px;background:#3b88f5">已计...</div>
<div class="tag" style="left:70.19999999999999px;top:26.600000000000012px;width:44px;background:#14b4d2">订单计...</div>
<div class="td" style="left:140.8px;top:28.100000000000012px">第<span class="D">11</span>月-生产计<br>划<span class="D">2023.11</span><span class="U">A</span><span class="D">01</span></div>
<div class="td" style="left:215.0px;top:28.100000000000012px"><span class="U">SCJHXSDD</span><span class="D">2309</span><br><span class="D">27-07-231114-</span><br><span class="D">01</span></div>
<div class="td" style="left:288.3px;top:28.100000000000012px"><span class="D">2023-11-01</span></div>
<div class="td" style="left:435.0px;top:28.100000000000012px"><span class="D">2023-09-26</span></div>
<div class="td" style="left:508.29999999999995px;top:28.100000000000012px">示例：上海帆软-<br>第<span class="D">5</span>份销售订单</div>
<div class="td" style="left:585.8px;top:28.100000000000012px"><span class="U">D</span><span class="W">ell</span>机箱</div>
<div class="td" style="left:646.7px;top:28.100000000000012px"><span class="U">A</span><span class="D">0001</span></div>
<div class="td" style="left:706.5px;top:28.100000000000012px">组件</div>
<div class="td" style="left:767.9px;top:28.100000000000012px"><span class="U">STP</span><span class="D">-</span><span class="D">100</span></div>
<div class="td" style="left:818.4px;top:28.100000000000012px;width:67.50000000000011px;text-align:right"><span class="D">10</span></div>
<div class="tag" style="left:6.800000000000011px;top:76.10000000000001px;width:36.5px;background:#3b88f5">已计...</div>
<div class="tag" style="left:70.19999999999999px;top:76.10000000000001px;width:44px;background:#14b4d2">订单计...</div>
<div class="td" style="left:140.8px;top:77.60000000000001px">第<span class="D">11</span>月-生产计<br>划<span class="D">2023.11</span><span class="U">A</span><span class="D">01</span></div>
<div class="td" style="left:215.0px;top:77.60000000000001px"><span class="U">SCJHXSDD</span><span class="D">2309</span><br><span class="D">27-07-231114-</span><br><span class="D">01</span></div>
<div class="td" style="left:288.3px;top:77.60000000000001px"><span class="D">2023-11-01</span></div>
<div class="td" style="left:435.0px;top:77.60000000000001px"><span class="D">2023-09-26</span></div>
<div class="td" style="left:508.29999999999995px;top:77.60000000000001px">示例：上海帆软-<br>第<span class="D">5</span>份销售订单</div>
<div class="td" style="left:585.8px;top:77.60000000000001px">联想机箱</div>
<div class="td" style="left:646.7px;top:77.60000000000001px"><span class="U">A</span><span class="D">0002</span></div>
<div class="td" style="left:706.5px;top:77.60000000000001px">组件</div>
<div class="td" style="left:767.9px;top:77.60000000000001px"><span class="U">QTP</span><span class="D">-</span><span class="D">100</span></div>
<div class="td" style="left:818.4px;top:77.60000000000001px;width:67.50000000000011px;text-align:right"><span class="D">10</span></div>
<div class="td" style="left:892.9000000000001px;top:77.60000000000001px;width:59.19999999999982px;text-align:right"><span class="D">10</span></div>
<div class="tag" style="left:6.800000000000011px;top:125.60000000000001px;width:36.5px;background:#3b88f5">已计...</div>
<div class="tag" style="left:70.19999999999999px;top:125.60000000000001px;width:44px;background:#14b4d2">订单计...</div>
<div class="td" style="left:140.8px;top:127.10000000000001px">第<span class="D">11</span>月-生产计<br>划<span class="D">2023.11</span><span class="U">A</span><span class="D">01</span></div>
<div class="td" style="left:215.0px;top:127.10000000000001px"><span class="U">SCJHXSDD</span><span class="D">2309</span><br><span class="D">27-07-231114-</span><br><span class="D">01</span></div>
<div class="td" style="left:288.3px;top:127.10000000000001px"><span class="D">2023-11-01</span></div>
<div class="td" style="left:435.0px;top:127.10000000000001px"><span class="D">2023-09-26</span></div>
<div class="td" style="left:508.29999999999995px;top:127.10000000000001px">示例：上海帆软-<br>第<span class="D">5</span>份销售订单</div>
<div class="td" style="left:585.8px;top:127.10000000000001px">联想交换机</div>
<div class="td" style="left:646.7px;top:127.10000000000001px"><span class="U">A</span><span class="D">0003</span></div>
<div class="td" style="left:706.5px;top:127.10000000000001px">组件</div>
<div class="td" style="left:767.9px;top:127.10000000000001px"><span class="U">QSY</span><span class="D">-</span><span class="D">120</span></div>
<div class="td" style="left:818.4px;top:127.10000000000001px;width:67.50000000000011px;text-align:right"><span class="D">10</span></div>
<div class="tag" style="left:6.800000000000011px;top:175.10000000000002px;width:36.5px;background:#3b88f5">已计...</div>
<div class="tag" style="left:70.19999999999999px;top:175.10000000000002px;width:44px;background:#14b4d2">订单计...</div>
<div class="td" style="left:140.8px;top:176.60000000000002px">第<span class="D">11</span>月-生产计<br>划<span class="D">2023.11</span><span class="U">A</span><span class="D">01</span></div>
<div class="td" style="left:215.0px;top:176.60000000000002px"><span class="U">SCJHXSDD</span><span class="D">2309</span><br><span class="D">27-07-231114-</span><br><span class="D">01</span></div>
<div class="td" style="left:288.3px;top:176.60000000000002px"><span class="D">2023-11-01</span></div>
<div class="td" style="left:435.0px;top:176.60000000000002px"><span class="D">2023-09-26</span></div>
<div class="td" style="left:508.29999999999995px;top:176.60000000000002px">示例：上海帆软-<br>第<span class="D">5</span>份销售订单</div>
<div class="td" style="left:585.8px;top:176.60000000000002px"><span class="U">D</span><span class="W">ell</span>交换机</div>
<div class="td" style="left:646.7px;top:176.60000000000002px"><span class="U">A</span><span class="D">0004</span></div>
<div class="td" style="left:706.5px;top:176.60000000000002px">组件</div>
<div class="td" style="left:767.9px;top:176.60000000000002px"><span class="U">SYR</span><span class="D">-</span><span class="D">100</span></div>
<div class="td" style="left:818.4px;top:176.60000000000002px;width:67.50000000000011px;text-align:right"><span class="D">10</span></div>
<div class="tag" style="left:6.800000000000011px;top:224.60000000000002px;width:36.5px;background:#d9ac45"></div>
<div class="tag" style="left:70.19999999999999px;top:224.60000000000002px;width:44px;background:#14b4d2"></div>
<div class="a" style="left:970.8px;top:21.8px;width:6px;height:300px;background:#f9fafd"></div>
<div class="a" style="left:970.8px;top:0.5px;width:5.5px;height:55.7px;border-radius:3px;background:#c1c3c8"></div>
</div>
<div class="a" style="left:6.400000000000006px;top:248.0px;width:572px;height:5.6px;border-radius:3px;background:rgba(160,164,176,0.72)"></div>
<div class="a" style="left:6.300000000000011px;top:49px;width:1px;height:205px;background:#dfe8f6"></div>
<div class="a" style="left:6.0px;top:253.60000000000002px;width:977px;height:30.2px;border:1px solid #e1e9f6;border-top:none;background:#fff"></div>
<div class="a" style="left:12.800000000000011px;top:258.4px;width:21.4px;height:21px;border:1px solid #e1e9f6;border-radius:3px"></div>
<svg class="a" style="left:19.80000000000001px;top:265px" width="8" height="8" viewBox="0 0 8 8" fill="none" stroke="#55585f" stroke-width="0.8"><rect x="0.5" y="0.8" width="7" height="6.4" rx="0.6"/><line x1="4" y1="0.8" x2="4" y2="7.2"/></svg>
<div class="a" style="left:37.5px;top:258.4px;width:73.8px;height:21px;border:1px solid #e1e9f6;border-radius:3px"></div>
<div class="a t" style="left:43.5px;top:264.29999999999995px;font-size:9.4px;color:#4a4d55"><span class="D">20</span> 条/页</div>
<svg class="a" style="left:96.80000000000001px;top:266.5px" width="8" height="5" viewBox="0 0 8 5"><path d="M0.8 0.8 L4 4 L7.2 0.8" stroke="#43464e" stroke-width="1" fill="none"/></svg>
<div class="a t" style="left:117.0px;top:264.29999999999995px;font-size:9.4px;color:#43464e">共 <span class="D">22</span> 条</div>
<div class="a" style="left:890.0999999999999px;top:258.6px;width:21px;height:21px;border:1px solid #e1e4ea;border-radius:3px;background:#f2f3f5"></div>
<svg class="a" style="left:897.8px;top:265px" width="5" height="8" viewBox="0 0 5 8"><path d="M4 0.8 L1 4 L4 7.2" stroke="#c0c3c8" stroke-width="1" fill="none"/></svg>
<div class="a" style="left:914.0px;top:258.6px;width:21px;height:21px;border:1px solid #e1e4ea;border-radius:3px;background:#fff;font-size:9.4px;line-height:19px;text-align:center;color:#43464e"><span class="D">1</span></div>
<div class="a t" style="left:939.3px;top:264.29999999999995px;font-size:9.4px;color:#43464e">/ <span class="D">2</span></div>
<div class="a" style="left:954.5999999999999px;top:258.6px;width:21px;height:21px;border:1px solid #e1e4ea;border-radius:3px;background:#fff"></div>
<svg class="a" style="left:962.8px;top:265px" width="5" height="8" viewBox="0 0 5 8"><path d="M1 0.8 L4 4 L1 7.2" stroke="#43464e" stroke-width="1" fill="none"/></svg>
</div>
<div class="lblb" style="left:13.800000000000011px;top:513.4px">生产工单状态</div>
<div class="btn" style="left:16.400000000000006px;top:528.6px;width:59.8px">已派工</div>
<div class="btn" style="left:81.60000000000002px;top:528.6px;width:59.8px">待派工</div>
<div class="btn" style="left:146.60000000000002px;top:528.6px;width:59.8px">已完结</div>
<div class="lbl" style="left:230.20000000000005px;top:513.4px">生产工单名称</div>
<div class="eq" style="left:355.79999999999995px;top:512.5px">等于任意一个</div>
<svg class="a" style="left:414.29999999999995px;top:515.0px" width="7" height="5" viewBox="0 0 7 5"><path d="M0 0 H7 L3.5 4.4 Z" fill="#3b82e4"/></svg>
<div class="sel" style="left:229.60000000000002px;top:529.6999999999999px;width:197.2px;height:21.4px"></div>
<svg class="a" style="left:411.29999999999995px;top:539.0px" width="8" height="5" viewBox="0 0 8 5"><path d="M0.8 0.8 L4 4 L7.2 0.8" stroke="#3b82e4" stroke-width="1.15" fill="none"/></svg>
<div class="lbl" style="left:446.20000000000005px;top:513.4px">生产班组</div>
<div class="eq" style="left:571.8px;top:512.5px">等于任意一个</div>
<svg class="a" style="left:630.3px;top:515.0px" width="7" height="5" viewBox="0 0 7 5"><path d="M0 0 H7 L3.5 4.4 Z" fill="#3b82e4"/></svg>
<div class="sel" style="left:445.6px;top:529.6999999999999px;width:197.2px;height:21.4px"></div>
<svg class="a" style="left:627.3px;top:539.0px" width="8" height="5" viewBox="0 0 8 5"><path d="M0.8 0.8 L4 4 L7.2 0.8" stroke="#3b82e4" stroke-width="1.15" fill="none"/></svg>
<div class="lbl" style="left:662.2px;top:513.4px">产品名称</div>
<div class="eq" style="left:804.2px;top:512.5px">等于任意一个</div>
<svg class="a" style="left:862.7px;top:515.0px" width="7" height="5" viewBox="0 0 7 5"><path d="M0 0 H7 L3.5 4.4 Z" fill="#3b82e4"/></svg>
<div class="sel" style="left:661.6px;top:529.6999999999999px;width:213.6px;height:21.4px"></div>
<svg class="a" style="left:859.7px;top:539.0px" width="8" height="5" viewBox="0 0 8 5"><path d="M0.8 0.8 L4 4 L7.2 0.8" stroke="#3b82e4" stroke-width="1.15" fill="none"/></svg>
<div class="a t" style="left:13.5px;top:571.8px;font-size:9.4px;color:#43464e">生产工单执行跟踪</div>
<svg class="a" style="left:978.8px;top:570.6px" width="10" height="10" viewBox="0 0 10 10"><circle cx="5" cy="5" r="4.45" fill="none" stroke="#3dbd6f" stroke-width="0.9"/><rect x="4.55" y="4.5" width="0.9" height="2.9" fill="#3dbd6f"/><circle cx="5" cy="2.85" r="0.5" fill="#3dbd6f"/></svg>
<div class="a" style="left:13.5px;top:589.3px;width:976.5px;height:60px;overflow:hidden">
<div class="a" style="left:0;top:0;width:970.5px;height:21.9px;background:#c4dbf6"></div>
<div class="a" style="left:0;top:21.9px;width:970.5px;height:40px;background:#ecf2fb"></div>
<div class="a" style="left:86.30000000000001px;top:0;width:1px;height:21.9px;background:#e3edfa"></div>
<div class="a" style="left:86.30000000000001px;top:21.9px;width:1px;height:40px;background:#dfe8f6"></div>
<div class="a" style="left:163.7px;top:0;width:1px;height:21.9px;background:#e3edfa"></div>
<div class="a" style="left:163.7px;top:21.9px;width:1px;height:40px;background:#dfe8f6"></div>
<div class="a" style="left:233.7px;top:0;width:1px;height:21.9px;background:#e3edfa"></div>
<div class="a" style="left:233.7px;top:21.9px;width:1px;height:40px;background:#dfe8f6"></div>
<div class="a" style="left:290.4px;top:0;width:1px;height:21.9px;background:#e3edfa"></div>
<div class="a" style="left:290.4px;top:21.9px;width:1px;height:40px;background:#dfe8f6"></div>
<div class="a" style="left:364.20000000000005px;top:0;width:1px;height:21.9px;background:#e3edfa"></div>
<div class="a" style="left:364.20000000000005px;top:21.9px;width:1px;height:40px;background:#dfe8f6"></div>
<div class="a" style="left:436.70000000000005px;top:0;width:1px;height:21.9px;background:#e3edfa"></div>
<div class="a" style="left:436.70000000000005px;top:21.9px;width:1px;height:40px;background:#dfe8f6"></div>
<div class="a" style="left:526.3px;top:0;width:1px;height:21.9px;background:#e3edfa"></div>
<div class="a" style="left:526.3px;top:21.9px;width:1px;height:40px;background:#dfe8f6"></div>
<div class="a" style="left:611.8px;top:0;width:1px;height:21.9px;background:#e3edfa"></div>
<div class="a" style="left:611.8px;top:21.9px;width:1px;height:40px;background:#dfe8f6"></div>
<div class="a" style="left:666.7px;top:0;width:1px;height:21.9px;background:#e3edfa"></div>
<div class="a" style="left:666.7px;top:21.9px;width:1px;height:40px;background:#dfe8f6"></div>
<div class="a" style="left:725.2px;top:0;width:1px;height:21.9px;background:#e3edfa"></div>
<div class="a" style="left:725.2px;top:21.9px;width:1px;height:40px;background:#dfe8f6"></div>
<div class="a" style="left:782.1px;top:0;width:1px;height:21.9px;background:#e3edfa"></div>
<div class="a" style="left:782.1px;top:21.9px;width:1px;height:40px;background:#dfe8f6"></div>
<div class="a" style="left:839.5999999999999px;top:0;width:1px;height:21.9px;background:#e3edfa"></div>
<div class="a" style="left:839.5999999999999px;top:21.9px;width:1px;height:40px;background:#dfe8f6"></div>
<div class="a" style="left:905.5999999999999px;top:0;width:1px;height:21.9px;background:#e3edfa"></div>
<div class="a" style="left:905.5999999999999px;top:21.9px;width:1px;height:40px;background:#dfe8f6"></div>
<div class="a" style="left:970.0px;top:0;width:1px;height:60px;background:#e3e8f0"></div>
<div class="a t" style="left:7.2px;top:7.1px;font-size:9px;color:#3c3f47;letter-spacing:-0.4px">生产工单名称</div>
<svg class="a" style="left:76.30000000000001px;top:7px" width="6" height="8" viewBox="0 0 6 8"><path d="M0.3 3.4 L3 0.4 L5.7 3.4 Z M0.3 4.6 L3 7.6 L5.7 4.6 Z" fill="#1f2329"/></svg>
<div class="a t" style="left:94.00000000000001px;top:7.1px;font-size:9px;color:#3c3f47;letter-spacing:-0.4px">生产工单编号</div>
<svg class="a" style="left:153.7px;top:6px" width="6" height="8" viewBox="0 0 6 8"><path d="M0.3 4.6 L3 7.6 L5.7 4.6 Z" fill="#1f2329"/></svg>
<div class="a t" style="left:171.39999999999998px;top:7.1px;font-size:9px;color:#3c3f47;letter-spacing:-0.4px">工单状态</div>
<svg class="a" style="left:223.7px;top:7px" width="6" height="8" viewBox="0 0 6 8"><path d="M0.3 3.4 L3 0.4 L5.7 3.4 Z M0.3 4.6 L3 7.6 L5.7 4.6 Z" fill="#1f2329"/></svg>
<div class="a t" style="left:241.39999999999998px;top:7.1px;font-size:9px;color:#3c3f47;letter-spacing:-0.4px">生产班组</div>
<svg class="a" style="left:280.4px;top:8px" width="6" height="8" viewBox="0 0 6 8"><path d="M0.3 3.4 L3 0.4 L5.7 3.4 Z" fill="#1f2329"/></svg>
<div class="a t" style="left:298.09999999999997px;top:7.1px;font-size:9px;color:#3c3f47;letter-spacing:-0.4px">工单开始日期</div>
<svg class="a" style="left:354.20000000000005px;top:7px" width="6" height="8" viewBox="0 0 6 8"><path d="M0.3 3.4 L3 0.4 L5.7 3.4 Z M0.3 4.6 L3 7.6 L5.7 4.6 Z" fill="#1f2329"/></svg>
<div class="a t" style="left:371.90000000000003px;top:7.1px;font-size:9px;color:#3c3f47;letter-spacing:-0.4px">工单结束日期</div>
<svg class="a" style="left:426.70000000000005px;top:7px" width="6" height="8" viewBox="0 0 6 8"><path d="M0.3 3.4 L3 0.4 L5.7 3.4 Z M0.3 4.6 L3 7.6 L5.7 4.6 Z" fill="#1f2329"/></svg>
<div class="a t" style="left:444.40000000000003px;top:7.1px;font-size:9px;color:#3c3f47;letter-spacing:-0.4px">生产计划名称</div>
<svg class="a" style="left:516.3px;top:7px" width="6" height="8" viewBox="0 0 6 8"><path d="M0.3 3.4 L3 0.4 L5.7 3.4 Z M0.3 4.6 L3 7.6 L5.7 4.6 Z" fill="#1f2329"/></svg>
<div class="a t" style="left:534.0px;top:7.1px;font-size:9px;color:#3c3f47;letter-spacing:-0.4px">销售订单名称</div>
<svg class="a" style="left:601.8px;top:7px" width="6" height="8" viewBox="0 0 6 8"><path d="M0.3 3.4 L3 0.4 L5.7 3.4 Z M0.3 4.6 L3 7.6 L5.7 4.6 Z" fill="#1f2329"/></svg>
<div class="a t" style="left:619.5px;top:7.1px;font-size:9px;color:#3c3f47;letter-spacing:-0.4px">产品名称</div>
<svg class="a" style="left:656.7px;top:7px" width="6" height="8" viewBox="0 0 6 8"><path d="M0.3 3.4 L3 0.4 L5.7 3.4 Z M0.3 4.6 L3 7.6 L5.7 4.6 Z" fill="#1f2329"/></svg>
<div class="a t" style="left:674.4000000000001px;top:7.1px;font-size:9px;color:#3c3f47;letter-spacing:-0.4px">产品编码</div>
<svg class="a" style="left:715.2px;top:8px" width="6" height="8" viewBox="0 0 6 8"><path d="M0.3 3.4 L3 0.4 L5.7 3.4 Z" fill="#1f2329"/></svg>
<div class="a t" style="left:732.9000000000001px;top:7.1px;font-size:9px;color:#3c3f47;letter-spacing:-0.4px">产品属性</div>
<svg class="a" style="left:772.1px;top:7px" width="6" height="8" viewBox="0 0 6 8"><path d="M0.3 3.4 L3 0.4 L5.7 3.4 Z M0.3 4.6 L3 7.6 L5.7 4.6 Z" fill="#1f2329"/></svg>
<div class="a t" style="left:789.8000000000001px;top:7.1px;font-size:9px;color:#3c3f47;letter-spacing:-0.4px">规格型号</div>
<svg class="a" style="left:829.5999999999999px;top:7px" width="6" height="8" viewBox="0 0 6 8"><path d="M0.3 3.4 L3 0.4 L5.7 3.4 Z M0.3 4.6 L3 7.6 L5.7 4.6 Z" fill="#1f2329"/></svg>
<div class="a t" style="left:847.3px;top:7.1px;font-size:9px;color:#3c3f47;letter-spacing:-0.4px">已派工数量</div>
<svg class="a" style="left:895.5999999999999px;top:7px" width="6" height="8" viewBox="0 0 6 8"><path d="M0.3 3.4 L3 0.4 L5.7 3.4 Z M0.3 4.6 L3 7.6 L5.7 4.6 Z" fill="#1f2329"/></svg>
<div class="a t" style="left:913.3px;top:7.1px;font-size:9px;color:#3c3f47;letter-spacing:-0.4px">已报工数量</div>
<svg class="a" style="left:960.0px;top:7px" width="6" height="8" viewBox="0 0 6 8"><path d="M0.3 3.4 L3 0.4 L5.7 3.4 Z M0.3 4.6 L3 7.6 L5.7 4.6 Z" fill="#1f2329"/></svg>
<div class="td" style="left:7.0px;top:28.7px">第<span class="D">44</span>周-生产工单</div>
<div class="td" style="left:93.80000000000001px;top:28.7px"><span class="U">SCGD</span><span class="D">23111401</span></div>
<div class="td" style="left:297.9px;top:28.7px"><span class="D">2023-11-01</span></div>
<div class="td" style="left:444.20000000000005px;top:28.7px">第<span class="D">11</span>月-生产计划<br><span class="D">2023.11</span><span class="U">A</span><span class="D">01</span></div>
<div class="td" style="left:533.8px;top:28.7px">示例：上海帆软-<br>第<span class="D">5</span>份销售订单</div>
<div class="td" style="left:619.3px;top:28.7px">联想机箱</div>
<div class="td" style="left:674.2px;top:28.7px"><span class="U">A</span><span class="D">0002</span></div>
<div class="td" style="left:732.7px;top:28.7px">组件</div>
<div class="td" style="left:789.6px;top:28.7px"><span class="U">QTP</span><span class="D">-</span><span class="D">100</span></div>
<div class="td" style="left:241.2px;top:28.7px"><span class="U">A</span>组</div>
<div class="tag" style="left:171.8px;top:26.7px;width:36px;background:#3b88f5;padding-left:4.5px">已派工</div>
<div class="td" style="left:840.0999999999999px;top:28.7px;width:59.0px;text-align:right"><span class="D">10</span></div>
<div class="td" style="left:906.0999999999999px;top:28.7px;width:57.40000000000009px;text-align:right"><span class="D">5</span></div>
</div>
</div>
</div>
<div class="a" style="left:1194.5px;top:32px;width:5.5px;height:514px;border-radius:3px;background:#c1c3c7"></div>
</body></html>
